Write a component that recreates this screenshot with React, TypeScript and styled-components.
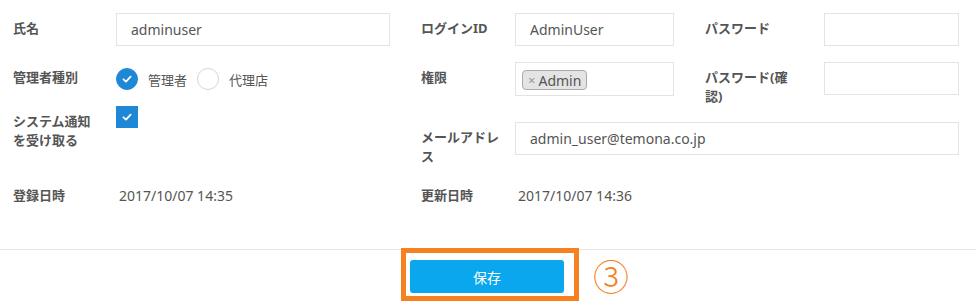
import React from "react";
import styled, { createGlobalStyle } from "styled-components";

const GlobalStyle = createGlobalStyle`
  body {
    margin: 0;
    background: #fff;
    font-family: "Noto Sans", "Noto Sans CJK JP", sans-serif;
    color: #555;
  }
`;

const Check = ({ size = 12 }: { size?: number }) => (
  <svg width={size} height={size} viewBox="0 0 12 12" fill="none">
    <polyline points="2.5,6.3 5,8.6 9.6,3.6" stroke="#fff" strokeWidth="1.8" strokeLinecap="round" strokeLinejoin="round" />
  </svg>
);

const App = () => {
  return (
    <Page>
      <GlobalStyle />
      <Form>
        <FieldGrid $cols="103px 274px">
          <Label>氏名</Label>
          <TextInput readOnly value="adminuser" />

          <Label>管理者種別</Label>
          <RadioGroup>
            <RadioOption>
              <Radio $checked>
                <Check />
              </Radio>
              管理者
            </RadioOption>
            <RadioOption>
              <Radio />
              代理店
            </RadioOption>
          </RadioGroup>

          <Label>システム通知を受け取る</Label>
          <div>
            <CheckBox>
              <Check />
            </CheckBox>
          </div>
        </FieldGrid>

        <FieldGrid $cols="94px 159px 150px 135px">
          <Label>ログインID</Label>
          <TextInput readOnly value="AdminUser" />
          <Label $indent>パスワード</Label>
          <TextInput type="password" readOnly value="" />

          <Label>権限</Label>
          <TagBox>
            <Tag>
              <TagRemove>×</TagRemove>Admin
            </Tag>
          </TagBox>
          <Label $indent>パスワード(確認)</Label>
          <TextInput type="password" readOnly value="" />

          <Label>メールアドレス</Label>
          <WideInput readOnly value="admin_user@temona.co.jp" />
        </FieldGrid>

        <DateRow $label="103px">
          <Label>登録日時</Label>
          <DateValue>2017/10/07 14:35</DateValue>
        </DateRow>
        <DateRow $label="94px">
          <Label>更新日時</Label>
          <DateValue>2017/10/07 14:36</DateValue>
        </DateRow>
      </Form>

      <Footer>
        <Highlight>
          <SaveButton>保存</SaveButton>
        </Highlight>
        <StepMark>③</StepMark>
      </Footer>
    </Page>
  );
};

// styles

const Page = styled.div`
  width: 976px;
  height: 304px;
  overflow: hidden;
`;

const Form = styled.div`
  display: grid;
  grid-template-columns: 377px 538px;
  column-gap: 31px;
  row-gap: 20px;
  padding: 13px 0 44px 13px;
`;

const FieldGrid = styled.div<{ $cols: string }>`
  display: grid;
  grid-template-columns: ${(p) => p.$cols};
  row-gap: 16px;
  align-items: start;
  align-content: start;
`;

const Label = styled.div<{ $indent?: boolean }>`
  box-sizing: border-box;
  padding: 6px 0 0 ${(p) => (p.$indent ? "31px" : "0")};
  max-width: ${(p) => (p.$indent ? "117px" : "86px")};
  font-family: "Noto Sans", "Noto Sans CJK JP", sans-serif;
  font-size: 13px;
  font-weight: bold;
  line-height: 19px;
  color: #555;
`;

const TextInput = styled.input`
  box-sizing: border-box;
  width: 100%;
  height: 33px;
  margin: 0;
  padding: 0 14px;
  border: 1px solid #e3e3e3;
  border-radius: 0;
  outline: none;
  background: #fff;
  font-family: "Noto Sans", "Noto Sans CJK JP", sans-serif;
  font-size: 14px;
  color: #555;
`;

const WideInput = styled(TextInput)`
  grid-column: 2 / 5;
`;

const TagBox = styled.div`
  box-sizing: border-box;
  height: 34px;
  padding: 5px 6px;
  border: 1px solid #e3e3e3;
  background: #fff;
`;

const Tag = styled.span`
  display: inline-flex;
  align-items: center;
  height: 18px;
  padding: 0 5px 0 5px;
  border: 1px solid #aaa;
  border-radius: 4px;
  background: #e4e4e4;
  font-size: 14px;
  color: #555;
`;

const TagRemove = styled.span`
  margin-right: 3px;
  color: #999;
  font-size: 13px;
`;

const RadioGroup = styled.div`
  display: flex;
  align-items: center;
  gap: 10px;
  padding-top: 6px;
`;

const RadioOption = styled.label`
  display: flex;
  align-items: center;
  gap: 10px;
  font-family: "Noto Sans CJK JP", sans-serif;
  font-size: 13px;
  line-height: 19px;
  color: #555;
`;

const Radio = styled.span<{ $checked?: boolean }>`
  box-sizing: border-box;
  display: flex;
  align-items: center;
  justify-content: center;
  width: 22px;
  height: 22px;
  border-radius: 50%;
  border: 1px solid ${(p) => (p.$checked ? "#1e88d6" : "#d6d6d6")};
  background: ${(p) => (p.$checked ? "#1e88d6" : "#fff")};
`;

const CheckBox = styled.span`
  display: flex;
  align-items: center;
  justify-content: center;
  width: 22px;
  height: 22px;
  background: #1e88d6;
`;

const DateRow = styled.div<{ $label: string }>`
  display: grid;
  grid-template-columns: ${(p) => p.$label} 1fr;
  align-items: center;
  > div:first-child {
    padding-top: 0;
  }
`;

const DateValue = styled.div`
  padding-left: 3px;
  font-size: 14px;
  line-height: 19px;
  color: #555;
`;

const Footer = styled.div`
  display: grid;
  grid-template-columns: 1fr auto 1fr;
  align-items: center;
  border-top: 1px solid #e6e6e6;
`;

const Highlight = styled.div`
  grid-column: 2;
  margin: -2px 0 0 4px;
  padding: 7px 10px 3px 4px;
  border: 5px solid #f68121;
`;

const SaveButton = styled.button`
  display: block;
  width: 154px;
  height: 33px;
  margin: 0;
  border: 0;
  border-radius: 3px;
  background: #0aa6ee;
  font-family: "Noto Sans CJK JP", sans-serif;
  font-size: 14px;
  color: #fff;
`;

const StepMark = styled.div`
  justify-self: start;
  margin: -2px 0 0 14px;
  font-family: "Noto Sans CJK JP", sans-serif;
  font-size: 36px;
  font-weight: 300;
  line-height: 1;
  color: #f68121;
`;

export default App;
